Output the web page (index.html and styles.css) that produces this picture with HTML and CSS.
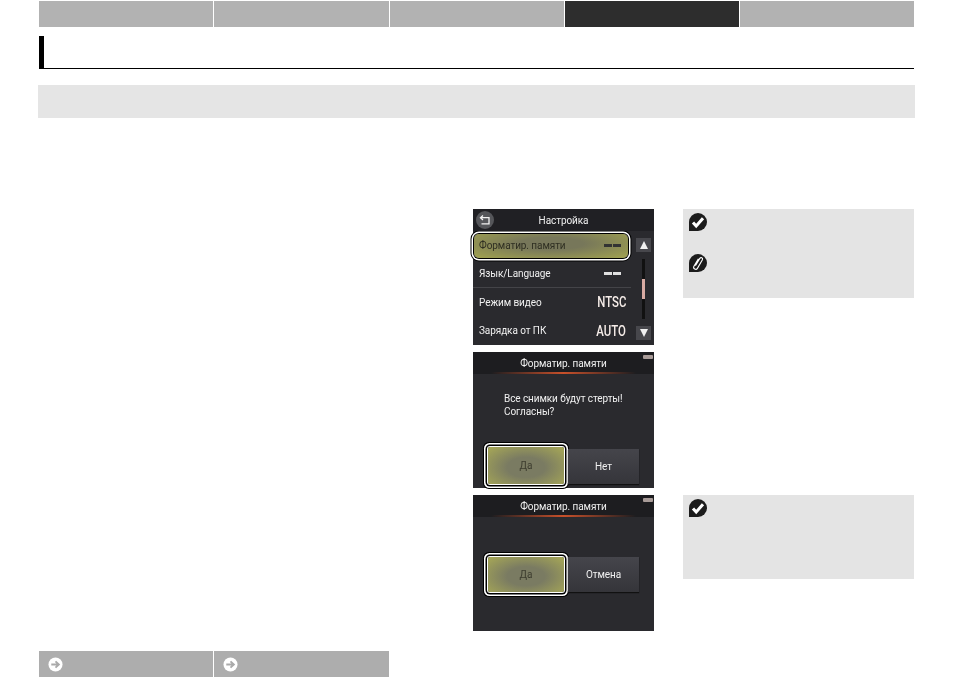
FILE: index.html
```html
<!DOCTYPE html>
<html lang="ru">
<head>
    <meta charset="UTF-8">
    <meta name="viewport" content="width=device-width, initial-scale=1.0">
    <title>Форматир. памяти</title>
    <link rel="stylesheet" href="styles.css">
</head>
<body>

    <div class="page">
        <div class="tabs">
            <div class="tab"></div>
            <div class="tab"></div>
            <div class="tab"></div>
            <div class="tab tab-active"></div>
            <div class="tab"></div>
        </div>

        <div class="title"></div>
        <div class="band"></div>

        <div class="content">
            <div class="step">
                <div class="screen">
                    <div class="battery"></div>
                    <div class="menu-head">
                        <svg class="back-icon" viewBox="0 0 18 18">
                            <circle cx="9" cy="9" r="9" fill="#55565a"/>
                            <path d="M7 4.5 4.5 6.7 7 8.9M4.7 6.7H13V12.8H5.5" fill="none" stroke="#f2f2f2" stroke-width="1.3"/>
                        </svg>
                        <span>Настройка</span>
                    </div>
                    <div class="menu">
                        <div class="menu-list">
                            <div class="menu-row menu-row-active"><span>Форматир. памяти</span><b class="dashes dashes-dark"></b></div>
                            <div class="menu-row menu-row-line"><span>Язык/Language</span><b class="dashes"></b></div>
                            <div class="menu-row"><span>Режим видео</span><b class="menu-value">NTSC</b></div>
                            <div class="menu-row"><span>Зарядка от ПК</span><b class="menu-value">AUTO</b></div>
                        </div>
                        <div class="scroll">
                            <div class="scroll-btn"><i class="arrow-up"></i></div>
                            <div class="scroll-track"><div class="scroll-thumb"></div></div>
                            <div class="scroll-btn"><i class="arrow-down"></i></div>
                        </div>
                    </div>
                </div>
                <div class="note">
                    <div class="note-item">
                        <svg class="note-icon" viewBox="0 0 18 18">
                            <path d="M0 18V9A9 9 0 1 1 9 18Z" fill="#1c1c1c"/>
                            <path d="M4 9.4 7.2 13 14 5.2" fill="none" stroke="#fff" stroke-width="3"/>
                        </svg>
                    </div>
                    <div class="note-item">
                        <svg class="note-icon" viewBox="0 0 18 18">
                            <path d="M0 18V9A9 9 0 1 1 9 18Z" fill="#1c1c1c"/>
                            <path d="M6.4 11.6 10.8 4.4C11.9 2.8 14.2 3.8 13.4 5.8L8.4 14.4C7.2 16.2 3.8 15 4.8 12.4L9.4 4.8" fill="none" stroke="#fff" stroke-width="1.1"/>
                        </svg>
                    </div>
                </div>
            </div>

            <div class="step">
                <div class="screen">
                    <div class="battery"></div>
                    <div class="dialog-head">Форматир. памяти</div>
                    <div class="dialog-text">Все снимки будут стерты!<br>Согласны?</div>
                    <div class="dialog-buttons">
                        <div class="btn btn-active">Да</div>
                        <div class="btn">Нет</div>
                    </div>
                </div>
            </div>

            <div class="step">
                <div class="screen screen-confirm">
                    <div class="battery"></div>
                    <div class="dialog-head">Форматир. памяти</div>
                    <div class="dialog-buttons">
                        <div class="btn btn-active">Да</div>
                        <div class="btn">Отмена</div>
                    </div>
                </div>
                <div class="note note-short">
                    <div class="note-item">
                        <svg class="note-icon" viewBox="0 0 18 18">
                            <path d="M0 18V9A9 9 0 1 1 9 18Z" fill="#1c1c1c"/>
                            <path d="M4 9.4 7.2 13 14 5.2" fill="none" stroke="#fff" stroke-width="3"/>
                        </svg>
                    </div>
                </div>
            </div>
        </div>

        <div class="bottom-nav">
            <div class="bottom-link">
                <svg class="go-icon" viewBox="0 0 16 16">
                    <circle cx="8" cy="8" r="7.5" fill="#fff"/>
                    <path d="M3.5 8H11M8 4.6 11.6 8 8 11.4" fill="none" stroke="#aaa" stroke-width="2"/>
                </svg>
            </div>
            <div class="bottom-link">
                <svg class="go-icon" viewBox="0 0 16 16">
                    <circle cx="8" cy="8" r="7.5" fill="#fff"/>
                    <path d="M3.5 8H11M8 4.6 11.6 8 8 11.4" fill="none" stroke="#aaa" stroke-width="2"/>
                </svg>
            </div>
        </div>
    </div>

</body>
</html>
```

FILE: styles.css
```css
body {
    margin: 0;
    background-color: #fff;
    font-family: 'Roboto', sans-serif;
}

.page {
    width: 877px;
    height: 676px;
    margin-left: 38px;
    padding-top: 1px;
}

.tabs {
    display: grid;
    grid-template-columns: 174px 175px 174px 174px 174px;
    gap: 1px;
    height: 26px;
    margin: 0 1px;
}

.tab {
    background-color: #b2b2b2;
}

.tab-active {
    background-color: #2d2d2d;
}

.title {
    box-sizing: border-box;
    height: 33px;
    margin: 9px 1px 0;
    border-bottom: 1px solid #000;
    border-left: 5px solid #000;
}

.band {
    height: 33px;
    margin-top: 16px;
    background-color: #e5e5e5;
}

.content {
    display: flex;
    flex-direction: column;
    gap: 7px;
    margin-top: 91px;
    margin-left: 435px;
}

.step {
    display: grid;
    grid-template-columns: 181px 231px;
    column-gap: 29px;
    align-items: start;
}

/* camera screens */
.screen {
    position: relative;
    display: flex;
    flex-direction: column;
    height: 136px;
    background-color: #2a2a2e;
    color: #f0f0f0;
    font-size: 10px;
    letter-spacing: -0.08px;
    filter: blur(0.3px);
}

.battery {
    position: absolute;
    top: 3px;
    right: 1px;
    width: 10px;
    height: 4px;
    border-radius: 1px;
    background-color: #a89b98;
}

.menu-head {
    display: flex;
    align-items: center;
    justify-content: center;
    position: relative;
    height: 22px;
    padding-top: 2px;
    box-sizing: border-box;
    background-color: #202024;
}

.back-icon {
    position: absolute;
    left: 3px;
    top: 2px;
    width: 18px;
    height: 18px;
}

.menu {
    display: flex;
    flex: 1;
}

.menu-list {
    width: 158px;
    margin-top: 1px;
}

.menu-row {
    display: flex;
    align-items: center;
    justify-content: space-between;
    box-sizing: border-box;
    height: 28.5px;
    padding: 0 5px 0 6px;
}

.menu-row-active {
    height: 24px;
    margin: 2px 3px 2px 1px;
    padding: 0 2px 0 5px;
    border-radius: 5px;
    color: #2f2f22;
    background: radial-gradient(ellipse at 50% 40%, #77775a 30%, #a2a34f 100%);
    box-shadow: 0 0 0 1px #000, 0 0 0 2.5px #fff, 0 0 0 3.5px #000;
}

.menu-row-line {
    border-bottom: 1px solid #444448;
}

.menu-value {
    display: inline-block;
    font-size: 15px;
    font-weight: 500;
    letter-spacing: 0;
    color: #f5ece8;
    transform: scaleX(0.76);
    transform-origin: right center;
}

.dashes {
    width: 17px;
    height: 3px;
    margin-right: 5px;
    background: linear-gradient(90deg, #e0e0e0 45%, transparent 45%, transparent 55%, #e0e0e0 55%);
}

.dashes-dark {
    background: linear-gradient(90deg, #333 45%, transparent 45%, transparent 55%, #333 55%);
}

.scroll {
    display: flex;
    flex-direction: column;
    align-items: center;
    width: 15px;
    margin: 7px 0 5px 5px;
}

.scroll-btn {
    display: flex;
    align-items: center;
    justify-content: center;
    width: 15px;
    height: 14px;
    background-color: #47474c;
}

.arrow-up, .arrow-down {
    width: 0;
    height: 0;
    border-left: 4px solid transparent;
    border-right: 4px solid transparent;
}

.arrow-up {
    border-bottom: 8px solid #f0f0f0;
}

.arrow-down {
    border-top: 8px solid #f0f0f0;
}

.scroll-track {
    flex: 1;
    width: 3px;
    margin: 7px 0;
    padding-top: 20px;
    background-color: #111;
}

.scroll-thumb {
    height: 20px;
    background-color: #d9aba3;
}

.dialog-head {
    box-sizing: border-box;
    height: 22px;
    padding-top: 6px;
    font-size: 10px;
    text-align: center;
    background: linear-gradient(90deg, transparent 10%, #c8502a 50%, transparent 90%) bottom / 100% 2px no-repeat, #1d1d20;
}

.dialog-text {
    flex: 1;
    padding: 18px 0 0 31px;
    font-size: 10px;
    line-height: 13px;
}

.dialog-buttons {
    display: flex;
    gap: 4px;
    margin: 0 14px 4px 15px;
}

.screen-confirm .dialog-buttons {
    margin-top: 40px;
}

.btn {
    display: flex;
    align-items: center;
    justify-content: center;
    width: 71px;
    height: 35px;
    background: linear-gradient(#45454b, #35353a);
    box-shadow: 0 1px 1px #111;
}

.btn-active {
    width: 76px;
    height: 37px;
    margin-top: -2px;
    border-radius: 2px;
    color: #3c3c2e;
    background: radial-gradient(ellipse at 50% 55%, #7a7b62 35%, #a8a956 100%);
    box-shadow: 0 0 0 1px #fff, 0 0 0 2.5px #000, 0 0 0 4px #fff, 0 0 0 5px #000;
}

.screen-confirm .btn-active {
    height: 35px;
    margin-top: 0;
}

/* side notes */
.note {
    box-sizing: border-box;
    height: 89px;
    padding: 4px 6px;
    background-color: #e4e4e4;
}

.note-short {
    height: 84px;
}

.note-item {
    height: 41px;
}

.note-icon {
    display: block;
    width: 18px;
    height: 18px;
}

.bottom-nav {
    display: grid;
    grid-template-columns: 174px 175px;
    gap: 1px;
    width: 350px;
    margin: 20px 0 0 1px;
}

.bottom-link {
    display: flex;
    align-items: center;
    height: 26px;
    padding-left: 9px;
    background-color: #adadad;
}

.go-icon {
    width: 15px;
    height: 15px;
}
```
